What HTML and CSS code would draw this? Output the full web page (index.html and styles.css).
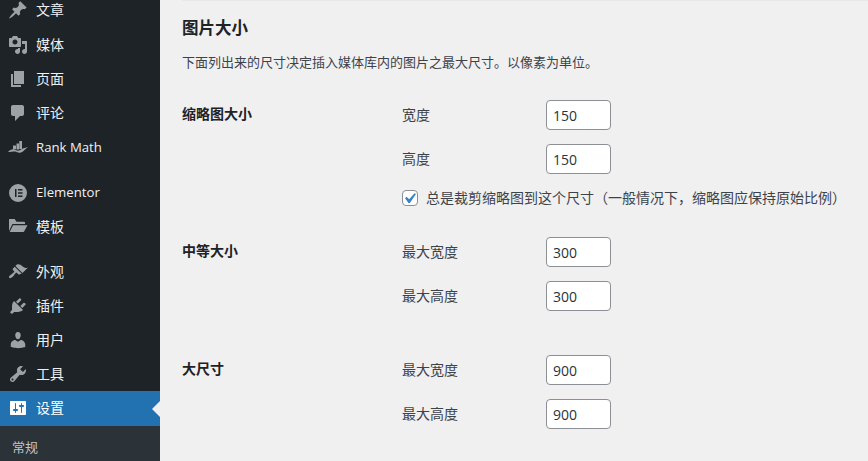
FILE: index.html
```html
<!DOCTYPE html>
<html lang="zh-CN">
<head>
<meta charset="utf-8">
<title>媒体设置</title>
<link rel="stylesheet" href="styles.css">
</head>
<body>
<div class="layout">
<nav class="sidebar">
  <ul class="menu">
    <li class="item first"><svg class="icon" viewBox="0 0 20 20"><path d="M10.44 3.02l1.82-1.82 6.36 6.35-1.83 1.82c-1.05-.68-2.48-.57-3.41.36l-.75.75c-.92.93-1.04 2.35-.35 3.41l-1.83 1.82-2.41-2.41-2.8 2.79c-.42.42-3.38 2.71-3.8 2.29s1.86-3.39 2.28-3.81l2.79-2.79L4.1 9.36l1.83-1.82c1.05.69 2.48.57 3.41-.36l.75-.75c.93-.92 1.05-2.35.35-3.41z"/></svg><span>文章</span></li>
    <li class="item"><svg class="icon" viewBox="0 0 20 20"><path d="M13 11V4c0-.55-.45-1-1-1h-1.67L9 1H5L3.67 3H2c-.55 0-1 .45-1 1v7c0 .55.45 1 1 1h10c.55 0 1-.45 1-1zM7 4.5c1.38 0 2.5 1.12 2.5 2.5S8.38 9.5 7 9.5 4.5 8.38 4.5 7 5.62 4.5 7 4.5zM14 6h5v10.5c0 1.38-1.12 2.5-2.5 2.5S14 17.88 14 16.5s1.12-2.5 2.5-2.5c.17 0 .34.02.5.05V9h-3V6zm-4 8.05V13h2v3.5c0 1.38-1.12 2.5-2.5 2.5S7 17.88 7 16.5 8.12 14 9.5 14c.17 0 .34.02.5.05z"/></svg><span>媒体</span></li>
    <li class="item"><svg class="icon" viewBox="0 0 20 20"><path d="M6 15V2h10v13H6zm-1 1h8v2H3V5h2v11z"/></svg><span>页面</span></li>
    <li class="item"><svg class="icon" viewBox="0 0 20 20"><path d="M5 2h9c1.1 0 2 .9 2 2v7c0 1.1-.9 2-2 2h-2l-5 5v-5H5c-1.1 0-2-.9-2-2V4c0-1.1.9-2 2-2z"/></svg><span>评论</span></li>
    <li class="item"><svg class="icon" viewBox="0 0 20 20"><path d="M5 8.500h3v3.800H5zM8.500 6.500h2.500v6H8.500zM11.300 4H14v8h-2.700zM0 15c2-2 4-3 6-2.500s3 1.500 5 1 4-3 9-3c-3 1-4 4-7 5s-4-1-6-1-5 .5-7 .5z"/></svg><span class="latin">Rank Math</span></li>
    <li class="sep"></li>
    <li class="item tall"><svg class="icon" viewBox="0 0 20 20"><path fill-rule="evenodd" d="M10 1a9 9 0 1 0 0 18 9 9 0 0 0 0-18zM7 6h1.500v8H7zm3 0h4.500v1.500H10zm0 3.250h4.500v1.500H10zm0 3.250h4.500V14H10z"/></svg><span class="latin">Elementor</span></li>
    <li class="item"><svg class="icon" viewBox="0 0 20 20"><path d="M1 2.500V14l3.200-6.500c.2-.4.5-.5.9-.5H17V5.500c0-.5-.4-.8-.8-.8H8.500L7 2.500c-.2-.3-.4-.4-.7-.4H1.500c-.3 0-.5.2-.5.4zM5 8.200L1.700 15h13.700c.3 0 .5-.1.7-.4l3.400-6.400z"/></svg><span>模板</span></li>
    <li class="sep"></li>
    <li class="item"><svg class="icon" viewBox="0 0 20 20"><path d="M14.480 11.060L7.410 3.990l1.500-1.500c.5-.56 2.300-.47 3.510.32 1.210.8 1.430 1.280 2.910 2.100 1.180.64 2.450 1.260 4.450.85zm-.71.71L6.700 4.700 4.930 6.470c-.39.39-.39 1.020 0 1.410l1.060 1.060c.39.39.39 1.030 0 1.420-.6.6-1.430 1.110-2.210 1.690-.35.26-.7.53-1.010.84C1.430 13.230.4 14.970 1.250 15.820s2.590-.18 3.930-1.530c.31-.31.58-.66.85-1.010.57-.78 1.080-1.610 1.680-2.210.39-.39 1.030-.39 1.420 0l1.060 1.060c.39.39 1.020.39 1.410 0z"/></svg><span>外观</span></li>
    <li class="item"><svg class="icon" viewBox="0 0 20 20"><path d="M13.110 4.360L9.870 7.600 8 5.730l3.240-3.240c.35-.34 1.050-.2 1.560.32.520.51.660 1.210.31 1.550zm-8 1.770l.91-1.120 9.010 9.010-1.190.84c-.71.71-2.630 1.160-3.820 1.160H6.140L4.900 17.260c-.59.59-1.540.59-2.120 0-.59-.58-.59-1.530 0-2.120l1.240-1.240v-3.880c0-1.130.4-3.190 1.090-3.890zm7.260 3.970l3.240-3.240c.34-.35 1.040-.21 1.550.31.520.51.660 1.210.31 1.550l-3.240 3.250z"/></svg><span>插件</span></li>
    <li class="item"><svg class="icon" viewBox="0 0 20 20"><path d="M10 9.250c-2.270 0-2.730-3.440-2.730-3.440C7 4.020 7.820 2 9.970 2c2.160 0 2.980 2.020 2.710 3.810 0 0-.41 3.440-2.680 3.440zm0 2.570L12.720 10c2.390 0 4.520 2.330 4.520 4.530v2.490s-3.650 1.130-7.240 1.130c-3.650 0-7.240-1.130-7.240-1.130v-2.490c0-2.250 1.940-4.480 4.470-4.480z"/></svg><span>用户</span></li>
    <li class="item"><svg class="icon" viewBox="0 0 20 20"><path d="M16.680 9.770c-1.340 1.340-3.300 1.670-4.950.99l-5.410 6.520c-.99.99-2.590.99-3.580 0s-.99-2.590 0-3.570l6.520-5.420c-.68-1.650-.35-3.610.99-4.950 1.280-1.280 3.120-1.620 4.720-1.060l-2.890 2.890 2.820 2.820 2.860-2.870c.53 1.580.18 3.390-1.080 4.650zM3.810 16.210c.4.39 1.040.39 1.430 0 .4-.4.4-1.040 0-1.430-.39-.4-1.030-.4-1.430 0-.39.39-.39 1.030 0 1.430z"/></svg><span>工具</span></li>
    <li class="item current"><svg class="icon" viewBox="0 0 20 20"><path d="M18 16V4c0-.55-.45-1-1-1H3c-.55 0-1 .45-1 1v12c0 .55.45 1 1 1h14c.55 0 1-.45 1-1zM8 11h1c.55 0 1 .45 1 1s-.45 1-1 1H8v1.500c0 .28-.22.5-.5.5s-.5-.22-.5-.5V13H6c-.55 0-1-.45-1-1s.45-1 1-1h1V5.500c0-.28.22-.5.5-.5s.5.22.5.5V11zm5-2h-1c-.55 0-1-.45-1-1s.45-1 1-1h1V5.500c0-.28.22-.5.5-.5s.5.22.5.5V7h1c.55 0 1 .45 1 1s-.45 1-1 1h-1v5.500c0 .28-.22.5-.5.5s-.5-.22-.5-.5V9z"/></svg><span>设置</span></li>
  </ul>
  <ul class="submenu">
    <li>常规</li>
  </ul>
</nav>
<main class="content">
  <h2 class="title">图片大小</h2>
  <p class="desc">下面列出来的尺寸决定插入媒体库内的图片之最大尺寸。以像素为单位。</p>
  <section class="group group-thumb">
    <h3 class="group-name">缩略图大小</h3>
    <div class="fields">
      <label class="field"><span class="field-label">宽度</span><input class="num" type="text" value="150"></label>
      <label class="field"><span class="field-label">高度</span><input class="num" type="text" value="150"></label>
      <label class="check"><span class="box"><svg viewBox="0 0 20 20"><path d="M14.830 4.890l1.340.94-5.810 8.380H9.020L5.780 9.670l1.340-1.250 2.570 2.400z"/></svg></span><span>总是裁剪缩略图到这个尺寸（一般情况下，缩略图应保持原始比例）</span></label>
    </div>
  </section>
  <section class="group group-medium">
    <h3 class="group-name">中等大小</h3>
    <div class="fields">
      <label class="field"><span class="field-label">最大宽度</span><input class="num" type="text" value="300"></label>
      <label class="field"><span class="field-label">最大高度</span><input class="num" type="text" value="300"></label>
    </div>
  </section>
  <section class="group group-large">
    <h3 class="group-name">大尺寸</h3>
    <div class="fields">
      <label class="field"><span class="field-label">最大宽度</span><input class="num" type="text" value="900"></label>
      <label class="field"><span class="field-label">最大高度</span><input class="num" type="text" value="900"></label>
    </div>
  </section>
</main>
</div>
</body>
</html>
```
FILE: styles.css
```css
* { box-sizing: border-box; }
html, body { margin: 0; padding: 0; height: 100%; overflow: hidden; }
body {
  background: #f0f0f1;
  color: #3c434a;
  font: 13px/1.4 "Noto Sans CJK SC", "Open Sans", sans-serif;
}
.layout { display: flex; height: 461px; overflow: hidden; }
.sidebar { width: 160px; flex: none; background: #1d2327; color: #f0f0f1; }
.menu, .submenu { list-style: none; margin: 0; padding: 0; }
.menu { margin-top: -7px; }
.item {
  position: relative;
  display: flex;
  align-items: center;
  gap: 8px;
  height: 34px;
  padding-left: 8px;
  font-size: 14px;
}
.first { margin-bottom: 1px; }
.tall { height: 35px; }
.icon { width: 20px; height: 20px; flex: none; fill: #9ca2a7; }
.latin { font-family: "Open Sans", "Noto Sans", sans-serif; font-size: 13.200px; }
.sep { height: 11px; }
.current { background: #2271b1; color: #fff; height: 35px; padding-bottom: 1px; }
.current .icon { fill: #fff; }
.current::after {
  content: "";
  position: absolute;
  right: 0;
  top: 10px;
  border: 8px solid transparent;
  border-right-color: #f0f0f1;
  border-left-width: 0;
}
.submenu { background: #2c3338; color: #c3c4c7; padding: 12px 12px 0; height: 40px; font-size: 13px; }
.content { flex: 1; min-width: 0; padding: 0 0 0 22px; }
.title {
  margin: 0;
  padding-top: 15px;
  border-top: 1px solid #e8e8e9;
  color: #1d2327;
  font-size: 16.500px;
  font-weight: 700;
  line-height: 23px;
}
.desc { margin: 13px 0 0; line-height: 20px; }
.group { display: flex; }
.group-thumb { margin-top: 28px; }
.group-medium { margin-top: 29px; }
.group-large { margin-top: 44px; }
.group-name {
  width: 220px;
  flex: none;
  margin: 0;
  padding-top: 3px;
  color: #1d2327;
  font-size: 14px;
  font-weight: 700;
  line-height: 20px;
}
.fields { display: flex; flex-direction: column; gap: 14px; font-size: 14px; }
.field { display: flex; align-items: center; height: 30px; }
.field-label { width: 144px; flex: none; }
.num {
  width: 65px;
  height: 30px;
  padding: 0 6px;
  border: 1px solid #8c8f94;
  border-radius: 4px;
  background: #fff;
  color: #2c3338;
  font: 14px "Open Sans", sans-serif;
}
.check { display: flex; align-items: center; gap: 8px; height: 20px; white-space: nowrap; }
.box {
  width: 16px;
  height: 16px;
  flex: none;
  border: 1px solid #8c8f94;
  border-radius: 4px;
  background: #fff;
}
.box svg { display: block; width: 21px; height: 21px; margin: -3px 0 0 -4px; fill: #3582c4; }
```
